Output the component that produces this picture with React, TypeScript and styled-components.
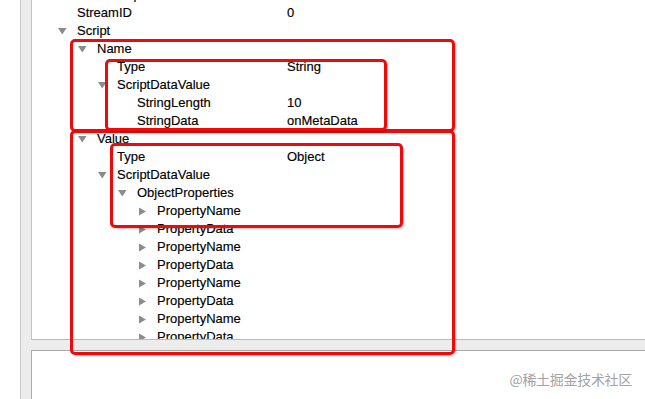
import React from 'react';
import styled, { createGlobalStyle } from 'styled-components';

const GlobalStyle = createGlobalStyle`
  html, body {
    margin: 0;
    padding: 0;
    background: #ffffff;
  }
  body {
    font-family: "Liberation Sans", Arial, sans-serif;
  }
`;

const Page = styled.div`
  position: relative;
  width: 645px;
  height: 399px;
  overflow: hidden;
  background: #ffffff;
  display: flex;
`;

const Frame = styled.div`
  margin-left: 20px;
  flex: 1;
  display: flex;
  flex-direction: column;
  gap: 10px;
  padding-left: 10px;
  background: #ececec;
  border-left: 1px solid #c9c9c9;
`;

const TreePanel = styled.div`
  height: 339px;
  overflow: hidden;
  background: #ffffff;
  border-left: 1px solid #bcc3d6;
  border-bottom: 1px solid #b3b8cc;
`;

const LowerPanel = styled.div`
  flex: 1;
  background: #ffffff;
  border-left: 1px solid #a9a9a9;
  border-top: 1px solid #a9a9a9;
`;

// scrolled list: the first row sits mostly above the panel's top edge
const TreeList = styled.div`
  margin-top: -14px;
  display: flex;
  flex-direction: column;
`;

const Row = styled.div`
  height: 18px;
  display: grid;
  grid-template-columns: 229px 1fr;
  align-items: center;
  padding-left: 26px;
  font-size: 13px;
  line-height: 18px;
  color: #000000;
  -webkit-text-stroke: 0.15px #000000;
  white-space: nowrap;
`;

const NameCell = styled.div<{ $level: number }>`
  display: flex;
  align-items: center;
  padding-left: ${p => p.$level * 20}px;
`;

const Toggle = styled.span`
  width: 19px;
  height: 18px;
  flex-shrink: 0;
  display: flex;
  align-items: center;
`;

const Label = styled.span``;

const Value = styled.span``;

const Mark = styled.div<{ $x: number; $y: number; $w: number; $h: number }>`
  position: absolute;
  left: ${p => p.$x}px;
  top: ${p => p.$y}px;
  width: ${p => p.$w}px;
  height: ${p => p.$h}px;
  box-sizing: border-box;
  border: 3px solid #ee0a0a;
  border-radius: 5px;
  box-shadow: 1px 1px 2px rgba(0, 0, 0, 0.25);
  pointer-events: none;
`;

const Watermark = styled.div`
  position: absolute;
  right: 13px;
  top: 369px;
  font-family: "Noto Sans CJK SC", "Liberation Sans", sans-serif;
  font-size: 14px;
  color: #a3a3a3;
  letter-spacing: -0.3px;
`;

type Node = {
  name: string;
  level: number;
  value?: string;
  state?: 'open' | 'closed';
};

const nodes: Node[] = [
  { name: 'TimestampExtended', level: 0 },
  { name: 'StreamID', level: 0, value: '0' },
  { name: 'Script', level: 0, state: 'open' },
  { name: 'Name', level: 1, state: 'open' },
  { name: 'Type', level: 2, value: 'String' },
  { name: 'ScriptDataValue', level: 2, state: 'open' },
  { name: 'StringLength', level: 3, value: '10' },
  { name: 'StringData', level: 3, value: 'onMetaData' },
  { name: 'Value', level: 1, state: 'open' },
  { name: 'Type', level: 2, value: 'Object' },
  { name: 'ScriptDataValue', level: 2, state: 'open' },
  { name: 'ObjectProperties', level: 3, state: 'open' },
  { name: 'PropertyName', level: 4, state: 'closed' },
  { name: 'PropertyData', level: 4, state: 'closed' },
  { name: 'PropertyName', level: 4, state: 'closed' },
  { name: 'PropertyData', level: 4, state: 'closed' },
  { name: 'PropertyName', level: 4, state: 'closed' },
  { name: 'PropertyData', level: 4, state: 'closed' },
  { name: 'PropertyName', level: 4, state: 'closed' },
  { name: 'PropertyData', level: 4, state: 'closed' },
];

const Disclosure = ({ state }: { state?: 'open' | 'closed' }) => {
  if (!state) return <Toggle />;
  return (
    <Toggle>
      {state === 'open' ? (
        <svg width="9" height="8" viewBox="0 0 9 8">
          <polygon points="0,1 8.5,1 4.25,7.5" fill="#8c8c8c" />
        </svg>
      ) : (
        <svg width="9" height="9" viewBox="0 0 9 9">
          <polygon points="1,0.5 8,4.5 1,8.5" fill="#8c8c8c" />
        </svg>
      )}
    </Toggle>
  );
};

const App = () => {
  return (
    <Page>
      <GlobalStyle />
      <Frame>
        <TreePanel>
          <TreeList>
            {nodes.map((n, i) => (
              <Row key={i}>
                <NameCell $level={n.level}>
                  <Disclosure state={n.state} />
                  <Label>{n.name}</Label>
                </NameCell>
                <Value>{n.value ?? ''}</Value>
              </Row>
            ))}
          </TreeList>
        </TreePanel>
        <LowerPanel />
      </Frame>

      <Mark $x={70} $y={39} $w={385} $h={93} />
      <Mark $x={70} $y={130} $w={385} $h={225} />
      <Mark $x={105} $y={59} $w={282} $h={72} />
      <Mark $x={110} $y={143} $w={293} $h={85} />

      <Watermark>@稀土掘金技术社区</Watermark>
    </Page>
  );
};

export default App;
